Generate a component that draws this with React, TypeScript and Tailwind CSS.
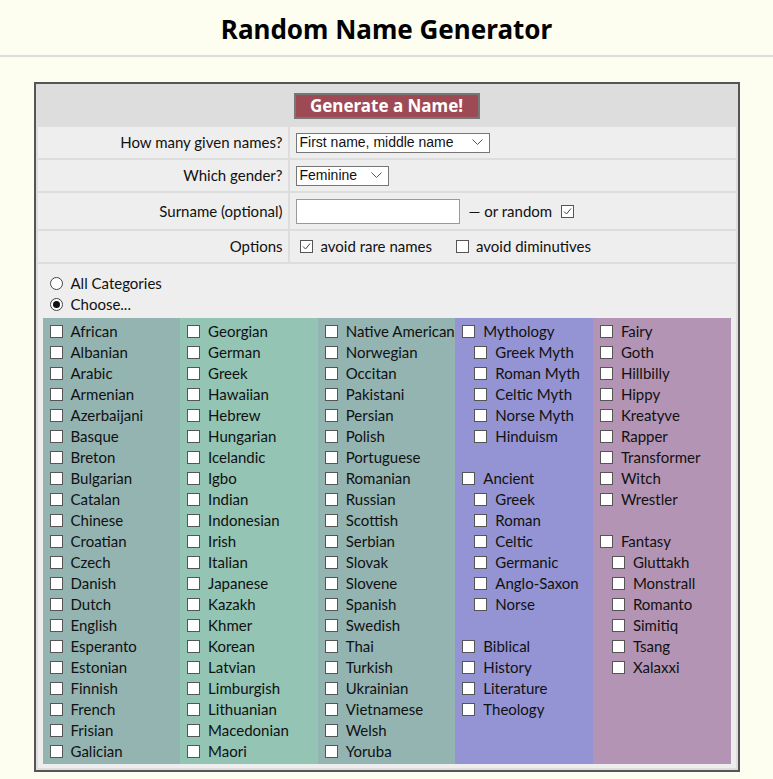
import { FC } from "react";

const font = { fontFamily: 'Lato, "Noto Sans", sans-serif' };

const Box: FC<{ checked?: boolean }> = ({ checked }) => (
  <span className="inline-flex h-[13px] w-[13px] shrink-0 items-center justify-center border border-[#555] bg-white">
    {checked && (
      <svg width="11" height="11" viewBox="0 0 11 11">
        <path d="M2 5.5 L4.5 8 L9 2.5" fill="none" stroke="#444" strokeWidth="1" />
      </svg>
    )}
  </span>
);

const Radio: FC<{ on?: boolean }> = ({ on }) => (
  <span className="inline-flex h-[13px] w-[13px] shrink-0 items-center justify-center rounded-full border border-[#444] bg-white">
    {on && <span className="h-[7px] w-[7px] rounded-full bg-[#111]" />}
  </span>
);

type Item = { name: string; sub?: boolean } | null;

const col1 = ["African", "Albanian", "Arabic", "Armenian", "Azerbaijani", "Basque", "Breton", "Bulgarian", "Catalan", "Chinese", "Croatian", "Czech", "Danish", "Dutch", "English", "Esperanto", "Estonian", "Finnish", "French", "Frisian", "Galician"];
const col2 = ["Georgian", "German", "Greek", "Hawaiian", "Hebrew", "Hungarian", "Icelandic", "Igbo", "Indian", "Indonesian", "Irish", "Italian", "Japanese", "Kazakh", "Khmer", "Korean", "Latvian", "Limburgish", "Lithuanian", "Macedonian", "Maori"];
const col3 = ["Native American", "Norwegian", "Occitan", "Pakistani", "Persian", "Polish", "Portuguese", "Romanian", "Russian", "Scottish", "Serbian", "Slovak", "Slovene", "Spanish", "Swedish", "Thai", "Turkish", "Ukrainian", "Vietnamese", "Welsh", "Yoruba"];

const plain = (xs: string[]): Item[] => xs.map((name) => ({ name }));
const subs = (xs: string[]): Item[] => xs.map((name) => ({ name, sub: true }));

const col4: Item[] = [
  { name: "Mythology" },
  ...subs(["Greek Myth", "Roman Myth", "Celtic Myth", "Norse Myth", "Hinduism"]),
  null,
  { name: "Ancient" },
  ...subs(["Greek", "Roman", "Celtic", "Germanic", "Anglo-Saxon", "Norse"]),
  null,
  ...plain(["Biblical", "History", "Literature", "Theology"]),
];

const col5: Item[] = [
  ...plain(["Fairy", "Goth", "Hillbilly", "Hippy", "Kreatyve", "Rapper", "Transformer", "Witch", "Wrestler"]),
  null,
  { name: "Fantasy" },
  ...subs(["Gluttakh", "Monstrall", "Romanto", "Simitiq", "Tsang", "Xalaxxi"]),
];

const Column: FC<{ items: Item[]; bg: string }> = ({ items, bg }) => (
  <div className={`pt-[3px] pb-[2px] pl-[7px] ${bg}`}>
    {items.map((it, i) =>
      it ? (
        <div key={i} className={`flex h-[21px] items-center gap-[8px] whitespace-nowrap ${it.sub ? "pl-[12px]" : ""}`}>
          <Box />
          <span>{it.name}</span>
        </div>
      ) : (
        <div key={i} className="h-[21px]" />
      )
    )}
  </div>
);

const Chevron = () => (
  <svg width="11" height="7" viewBox="0 0 11 7">
    <path d="M0.5 0.5 L5.5 5.5 L10.5 0.5" fill="none" stroke="#555" strokeWidth="1" />
  </svg>
);

const Row: FC<{ label: string; h: string; children: React.ReactNode }> = ({ label, h, children }) => (
  <div className={`flex gap-[2px] ${h}`}>
    <div className="flex w-[250px] shrink-0 items-center justify-end bg-[#eeeeee] pr-[5px]">{label}</div>
    <div className="flex flex-1 items-center bg-[#eeeeee] pl-[6px]">{children}</div>
  </div>
);

const selectCls =
  "flex h-[20px] items-center justify-between border border-[#767676] bg-white pr-[6px] pl-[3px] text-[14px] font-['Liberation_Sans',Arial,sans-serif]";

export default function App() {
  return (
    <div className="min-h-[779px] bg-[#fdfdf0] text-[15px] text-[#111]" style={font}>
      <div className="flex h-[57px] items-center justify-center border-b-2 border-[#dddddd] pt-[4px]">
        <h1 className="text-[26px] font-bold text-black" style={{ fontFamily: '"Noto Sans", sans-serif' }}>
          Random Name Generator
        </h1>
      </div>

      <div className="mx-auto mt-[25px] w-[706px] border-2 border-[#555] bg-[#dddddd] px-[2px] pb-[2px]">
        <div className="flex h-[43px] items-center justify-center">
          <button
            className="h-[26px] w-[186px] border-2 border-[#777] bg-[#9e4a55] text-[17px] font-bold leading-none text-white"
            style={{ fontFamily: '"Noto Sans", sans-serif' }}
          >
            Generate a Name!
          </button>
        </div>

        <div className="flex flex-col gap-[2px]">
          <Row label="How many given names?" h="h-[31px]">
            <div className={`${selectCls} w-[194px]`}>
              <span>First name, middle name</span>
              <Chevron />
            </div>
          </Row>
          <Row label="Which gender?" h="h-[31px]">
            <div className={`${selectCls} w-[93px]`}>
              <span>Feminine</span>
              <Chevron />
            </div>
          </Row>
          <Row label="Surname (optional)" h="h-[36px]">
            <div className="h-[25px] w-[164px] border border-[#999] bg-white" />
            <span className="ml-[9px]">— or random</span>
            <span className="ml-[9px] flex">
              <Box checked />
            </span>
          </Row>
          <Row label="Options" h="h-[31px]">
            <span className="ml-[4px] flex">
              <Box checked />
            </span>
            <span className="ml-[8px]">avoid rare names</span>
            <span className="ml-[24px] flex">
              <Box />
            </span>
            <span className="ml-[7px]">avoid diminutives</span>
          </Row>

          <div className="bg-[#eeeeee] px-[5px] pt-[9px] pb-[4px]">
            <div className="flex h-[21px] items-center gap-[8px] pl-[7px]">
              <Radio />
              <span>All Categories</span>
            </div>
            <div className="flex h-[21px] items-center gap-[8px] pl-[7px]">
              <Radio on />
              <span>Choose...</span>
            </div>
            <div className="mt-[3px] grid w-[688px] grid-cols-5">
              <Column items={plain(col1)} bg="bg-[#93b4b1]" />
              <Column items={plain(col2)} bg="bg-[#93c4b4]" />
              <Column items={plain(col3)} bg="bg-[#93b4b1]" />
              <Column items={col4} bg="bg-[#9494d4]" />
              <Column items={col5} bg="bg-[#b494b4]" />
            </div>
          </div>
        </div>
      </div>
    </div>
  );
}
